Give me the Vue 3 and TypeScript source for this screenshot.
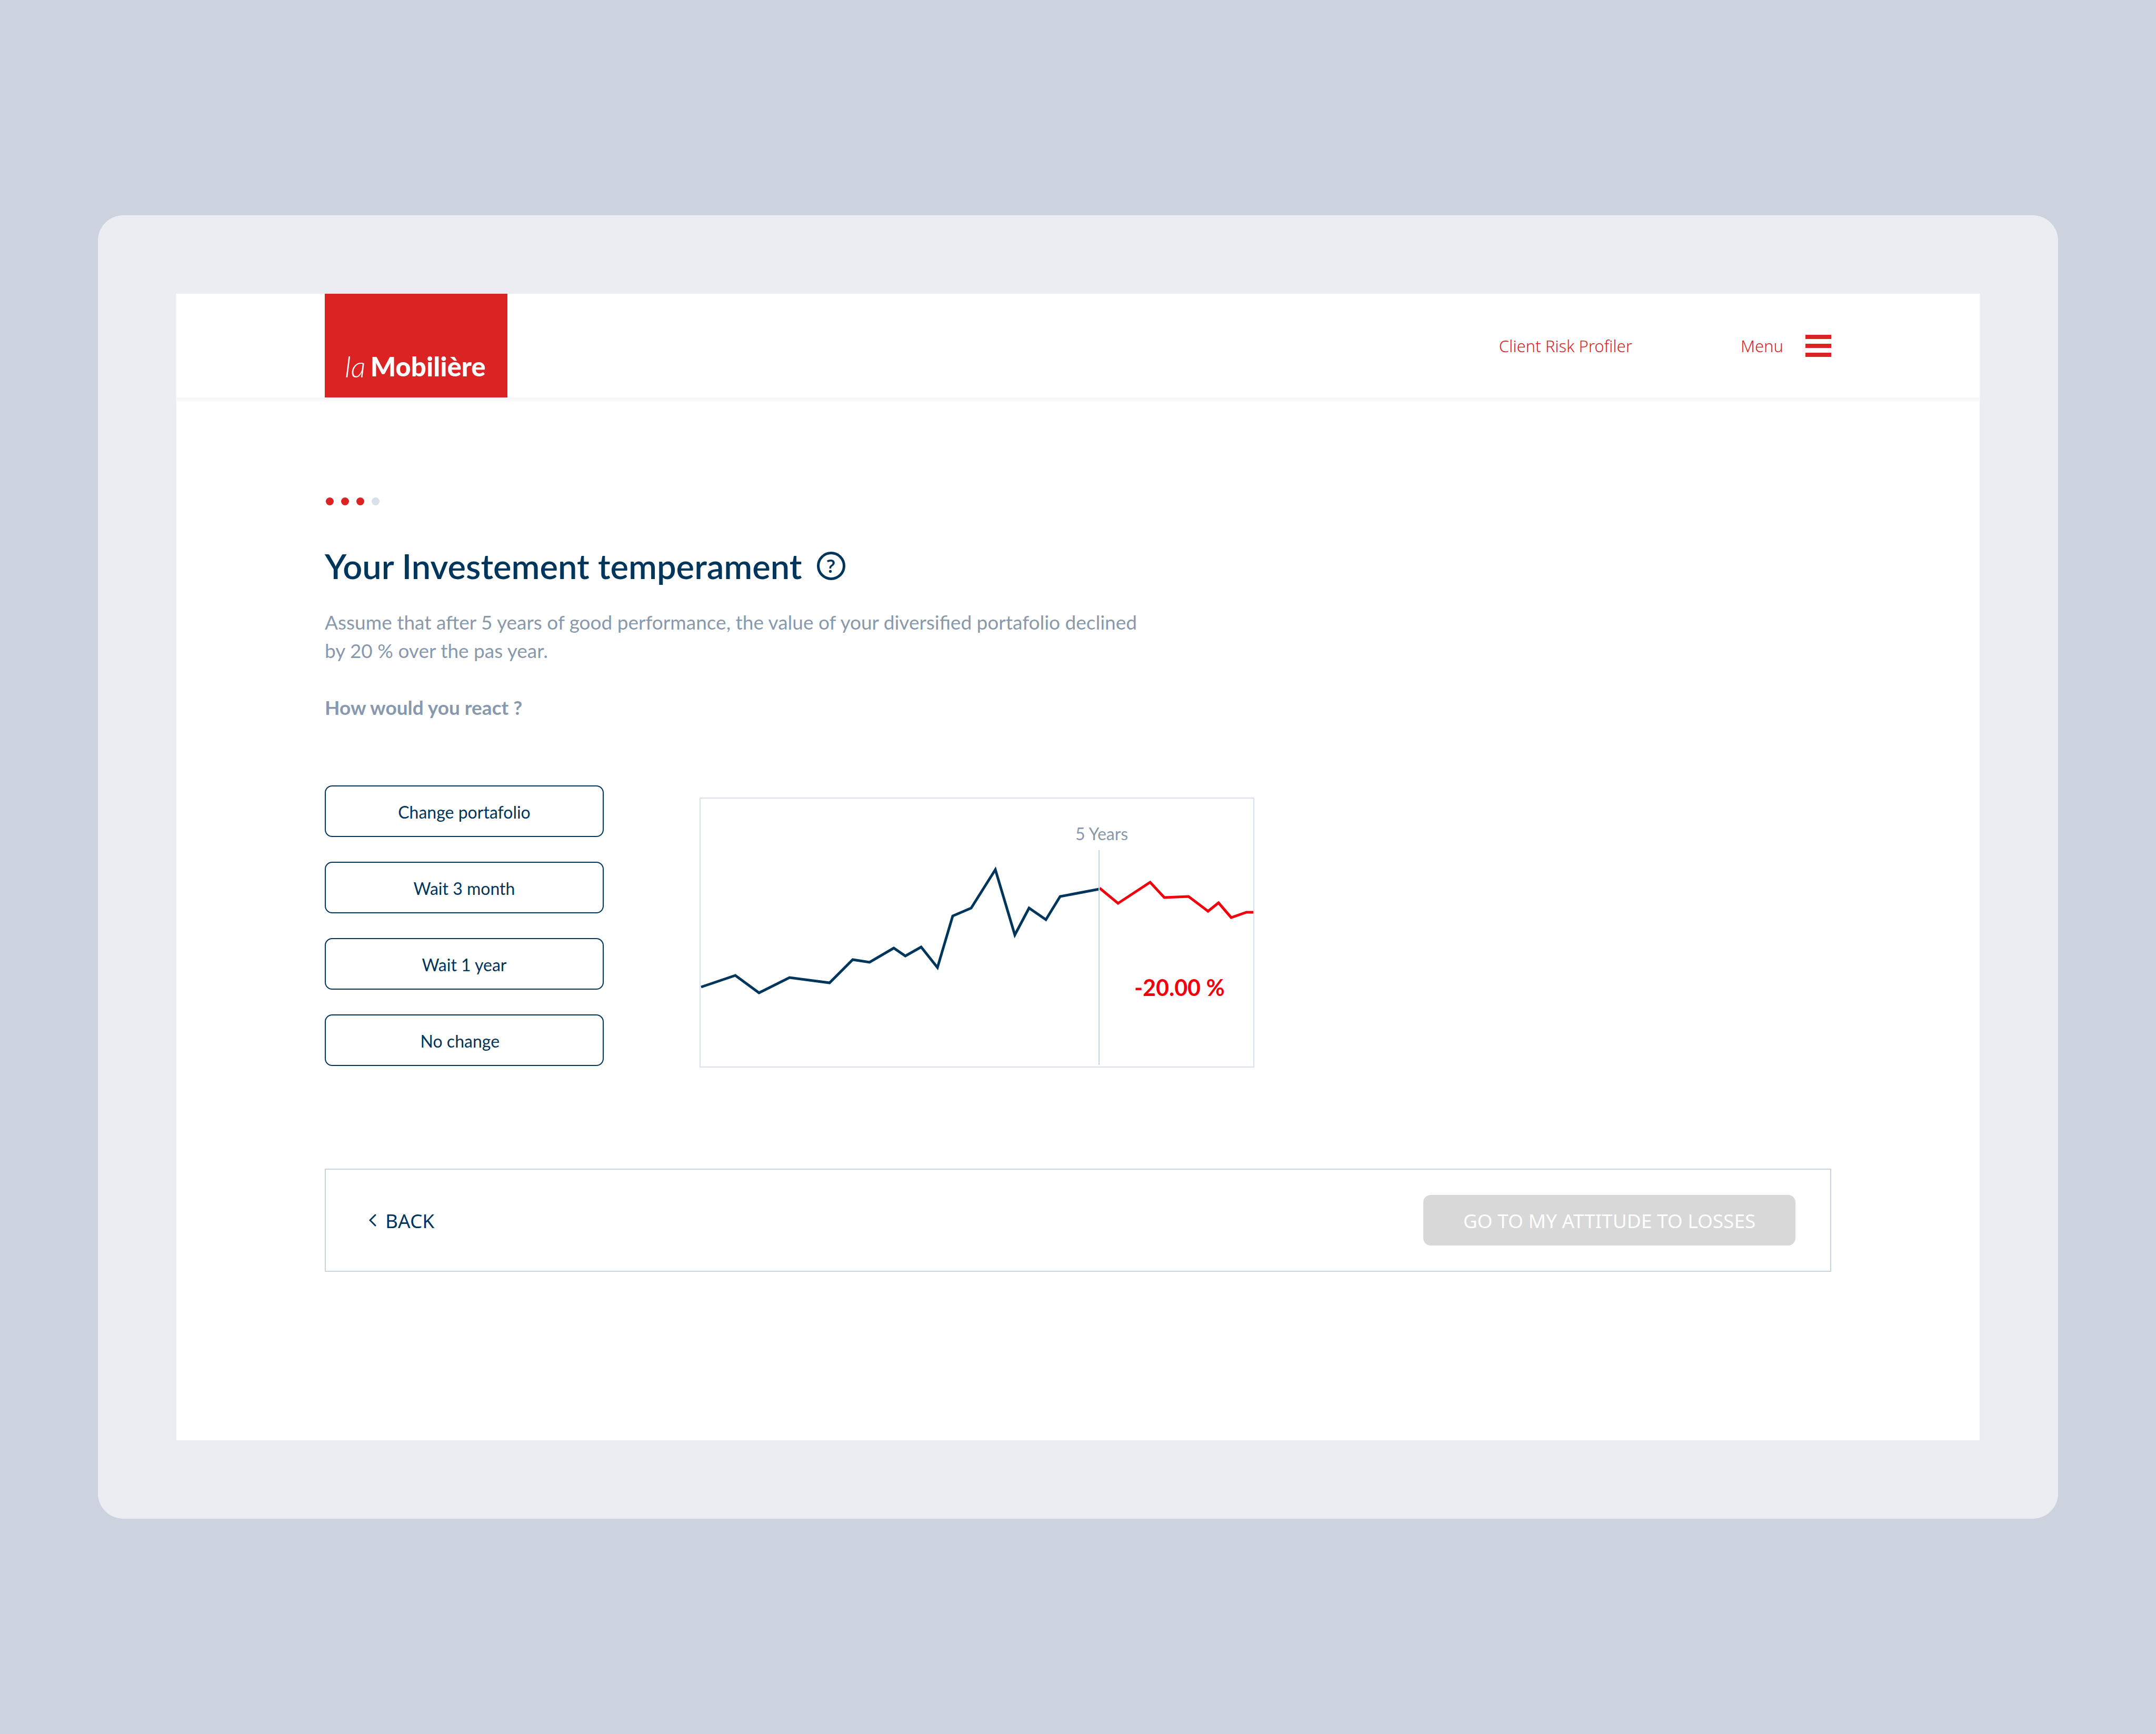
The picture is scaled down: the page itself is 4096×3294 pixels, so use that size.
<script setup lang="ts">
import { ref } from 'vue'

interface Option {
  id: string
  label: string
}

type Point = [number, number]

const totalSteps = 4
const currentStep = 3

const options: Option[] = [
  { id: 'change', label: 'Change portafolio' },
  { id: 'wait-3-months', label: 'Wait 3 month' },
  { id: 'wait-1-year', label: 'Wait 1 year' },
  { id: 'none', label: 'No change\u00a0\u00a0' },
]

const selected = ref<string | null>(null)

// Portfolio value over the first five years, in chart units
const growth: Point[] = [
  [3, 360], [68, 338], [113, 371], [171, 342], [247, 352], [291, 308],
  [323, 313], [369, 286], [391, 301], [421, 284], [452, 323], [481, 225],
  [516, 210], [562, 137], [599, 261], [626, 210], [658, 232], [685, 188],
  [759, 174],
]

// Decline during the last year
const decline: Point[] = [
  [760, 172], [795, 201], [856, 161], [883, 190], [929, 188], [966, 216],
  [986, 200], [1010, 228], [1039, 218], [1052, 218],
]

const toPoints = (line: Point[]): string => line.map((p) => p.join(',')).join(' ')
</script>

<template>
  <div class="stage">
    <div class="frame">
      <div class="page">
        <header class="header">
          <a class="logo" href="#" aria-label="la Mobilière">
            <span class="logo-la">la</span>
            <span class="logo-name">Mobilière</span>
          </a>
          <nav class="nav">
            <a class="nav-link" href="#">Client Risk Profiler</a>
            <button class="menu" type="button">
              <span>Menu</span>
              <span class="burger" aria-hidden="true"><i></i><i></i><i></i></span>
            </button>
          </nav>
        </header>

        <main class="content">
          <ol class="steps" aria-label="Progress">
            <li
              v-for="step in totalSteps"
              :key="step"
              class="step"
              :class="{ done: step <= currentStep }"
            ></li>
          </ol>

          <div class="title-row">
            <h1 class="title">Your Investement temperament</h1>
            <button class="help" type="button" aria-label="Help">?</button>
          </div>

          <p class="text">
            Assume that after 5 years of good performance, the value of your diversified
            portafolio declined by 20 % over the pas year.
          </p>
          <h2 class="question">How would you react ?</h2>

          <div class="answer">
            <div class="options">
              <button
                v-for="option in options"
                :key="option.id"
                class="option"
                type="button"
                :aria-pressed="selected === option.id"
                @click="selected = option.id"
              >{{ option.label }}</button>
            </div>

            <svg class="chart" viewBox="0 0 1054 513" role="img" aria-label="Portfolio value">
              <rect class="chart-frame" x="1" y="1" width="1052" height="511" />
              <polyline class="growth" :points="toPoints(growth)" />
              <polyline class="decline" :points="toPoints(decline)" />
              <line class="marker" x1="759" y1="100" x2="759" y2="508" />
              <text class="marker-label" x="714" y="81">5 Years</text>
              <text class="change" x="826" y="377">-20.00 %</text>
            </svg>
          </div>

          <footer class="actions">
            <a class="back" href="#">
              <svg class="chevron" viewBox="0 0 14 24" aria-hidden="true">
                <path d="M12 2 L2 12 L12 22" />
              </svg>
              <span>BACK</span>
            </a>
            <button class="next" type="button" disabled>GO TO MY ATTITUDE TO LOSSES</button>
          </footer>
        </main>
      </div>
    </div>
  </div>
</template>

<style>
body {
  margin: 0;
  background: #ccd2de;
}
</style>

<style scoped>
.stage {
  display: flex;
  align-items: center;
  box-sizing: border-box;
  min-height: 100vh;
  padding: 0 186px;
  font-family: Lato, "Noto Sans", sans-serif;
  color: #00355c;
}

.frame {
  flex: 1;
  padding: 149px;
  border-radius: 48px;
  background: #ecedf3;
}

.page {
  background: #fff;
}

.header {
  display: flex;
  justify-content: space-between;
  height: 197px;
  padding: 0 282px;
  box-shadow: 0 7px 4px #f7f7f7;
}

.logo {
  display: flex;
  align-items: flex-end;
  gap: 9px;
  box-sizing: border-box;
  width: 347px;
  padding: 0 0 33px 38px;
  background: #dc2323;
  color: #fff;
  line-height: 52px;
  text-decoration: none;
}

.logo-la {
  font-size: 56px;
  font-style: italic;
  font-weight: 300;
}

.logo-name {
  font-size: 51px;
  font-weight: 900;
}

.nav {
  display: flex;
  align-items: center;
  gap: 206px;
  font-family: "Noto Sans", sans-serif;
}

.nav-link,
.menu {
  color: #dc2323;
  font-family: inherit;
  font-size: 31px;
  font-weight: 300;
  text-decoration: none;
}

.menu {
  display: flex;
  align-items: center;
  gap: 42px;
  padding: 0;
  border: 0;
  background: none;
}

.burger {
  display: flex;
  flex-direction: column;
  gap: 9px;
  width: 49px;
}

.burger i {
  height: 8px;
  background: #dc2323;
}

.content {
  padding: 190px 282px 320px;
}

.steps {
  display: flex;
  gap: 14px;
  margin: 0 0 75px;
  padding: 0 0 0 2px;
  list-style: none;
}

.step {
  width: 15px;
  height: 15px;
  border-radius: 50%;
  background: #d8e1e9;
}

.step.done {
  background: #dc2323;
}

.title-row {
  display: flex;
  align-items: center;
  gap: 28px;
  margin-bottom: 40px;
}

.title {
  margin: 0;
  font-size: 65px;
  font-weight: 600;
  line-height: 80px;
}

.help {
  box-sizing: border-box;
  width: 54px;
  height: 54px;
  padding: 0;
  border: 5px solid #00355c;
  border-radius: 50%;
  background: none;
  color: #00355c;
  font-family: "Noto Sans", sans-serif;
  font-size: 34px;
  font-weight: 600;
  line-height: 44px;
  text-align: center;
}

.text,
.question {
  max-width: 1560px;
  margin: 0 0 54px;
  color: #8899ad;
  font-size: 37px;
  font-weight: 400;
  line-height: 54px;
}

.question {
  margin-bottom: 121px;
  font-weight: 700;
}

.answer {
  display: flex;
  align-items: flex-end;
  gap: 182px;
  margin-bottom: 192px;
}

.options {
  display: flex;
  flex-direction: column;
  gap: 47px;
  width: 530px;
  padding-bottom: 3px;
}

.option {
  height: 98px;
  padding: 2px 0 0;
  border: 2px solid #00355c;
  border-radius: 14px;
  background: #fff;
  color: #00355c;
  font-family: inherit;
  font-size: 32px;
}

.chart {
  display: block;
  width: 1054px;
}

.chart-frame {
  fill: none;
  stroke: #d9e0ec;
  stroke-width: 2;
}

.growth,
.decline {
  fill: none;
  stroke-width: 5;
}

.growth {
  stroke: #00355c;
}

.decline {
  stroke: #f3000c;
}

.marker {
  stroke: #c8d4da;
  stroke-width: 2;
}

.marker-label {
  fill: #8899ad;
  font-size: 32px;
}

.change {
  fill: #f3000c;
  font-size: 43px;
  font-weight: 700;
}

.actions {
  display: flex;
  align-items: center;
  justify-content: space-between;
  box-sizing: border-box;
  height: 196px;
  padding: 0 66px 0 82px;
  border: 2px solid #c8d5dc;
  font-family: "Noto Sans", sans-serif;
}

.back {
  display: flex;
  align-items: center;
  gap: 17px;
  color: #00355c;
  font-size: 37px;
  text-decoration: none;
}

.chevron {
  width: 14px;
  height: 24px;
  fill: none;
  stroke: #00355c;
  stroke-width: 3;
  stroke-linecap: round;
}

.next {
  width: 707px;
  height: 96px;
  padding: 0;
  border: 0;
  border-radius: 14px;
  background: #d8d8d8;
  color: #fff;
  font-family: inherit;
  font-size: 37px;
  font-weight: 400;
}
</style>
